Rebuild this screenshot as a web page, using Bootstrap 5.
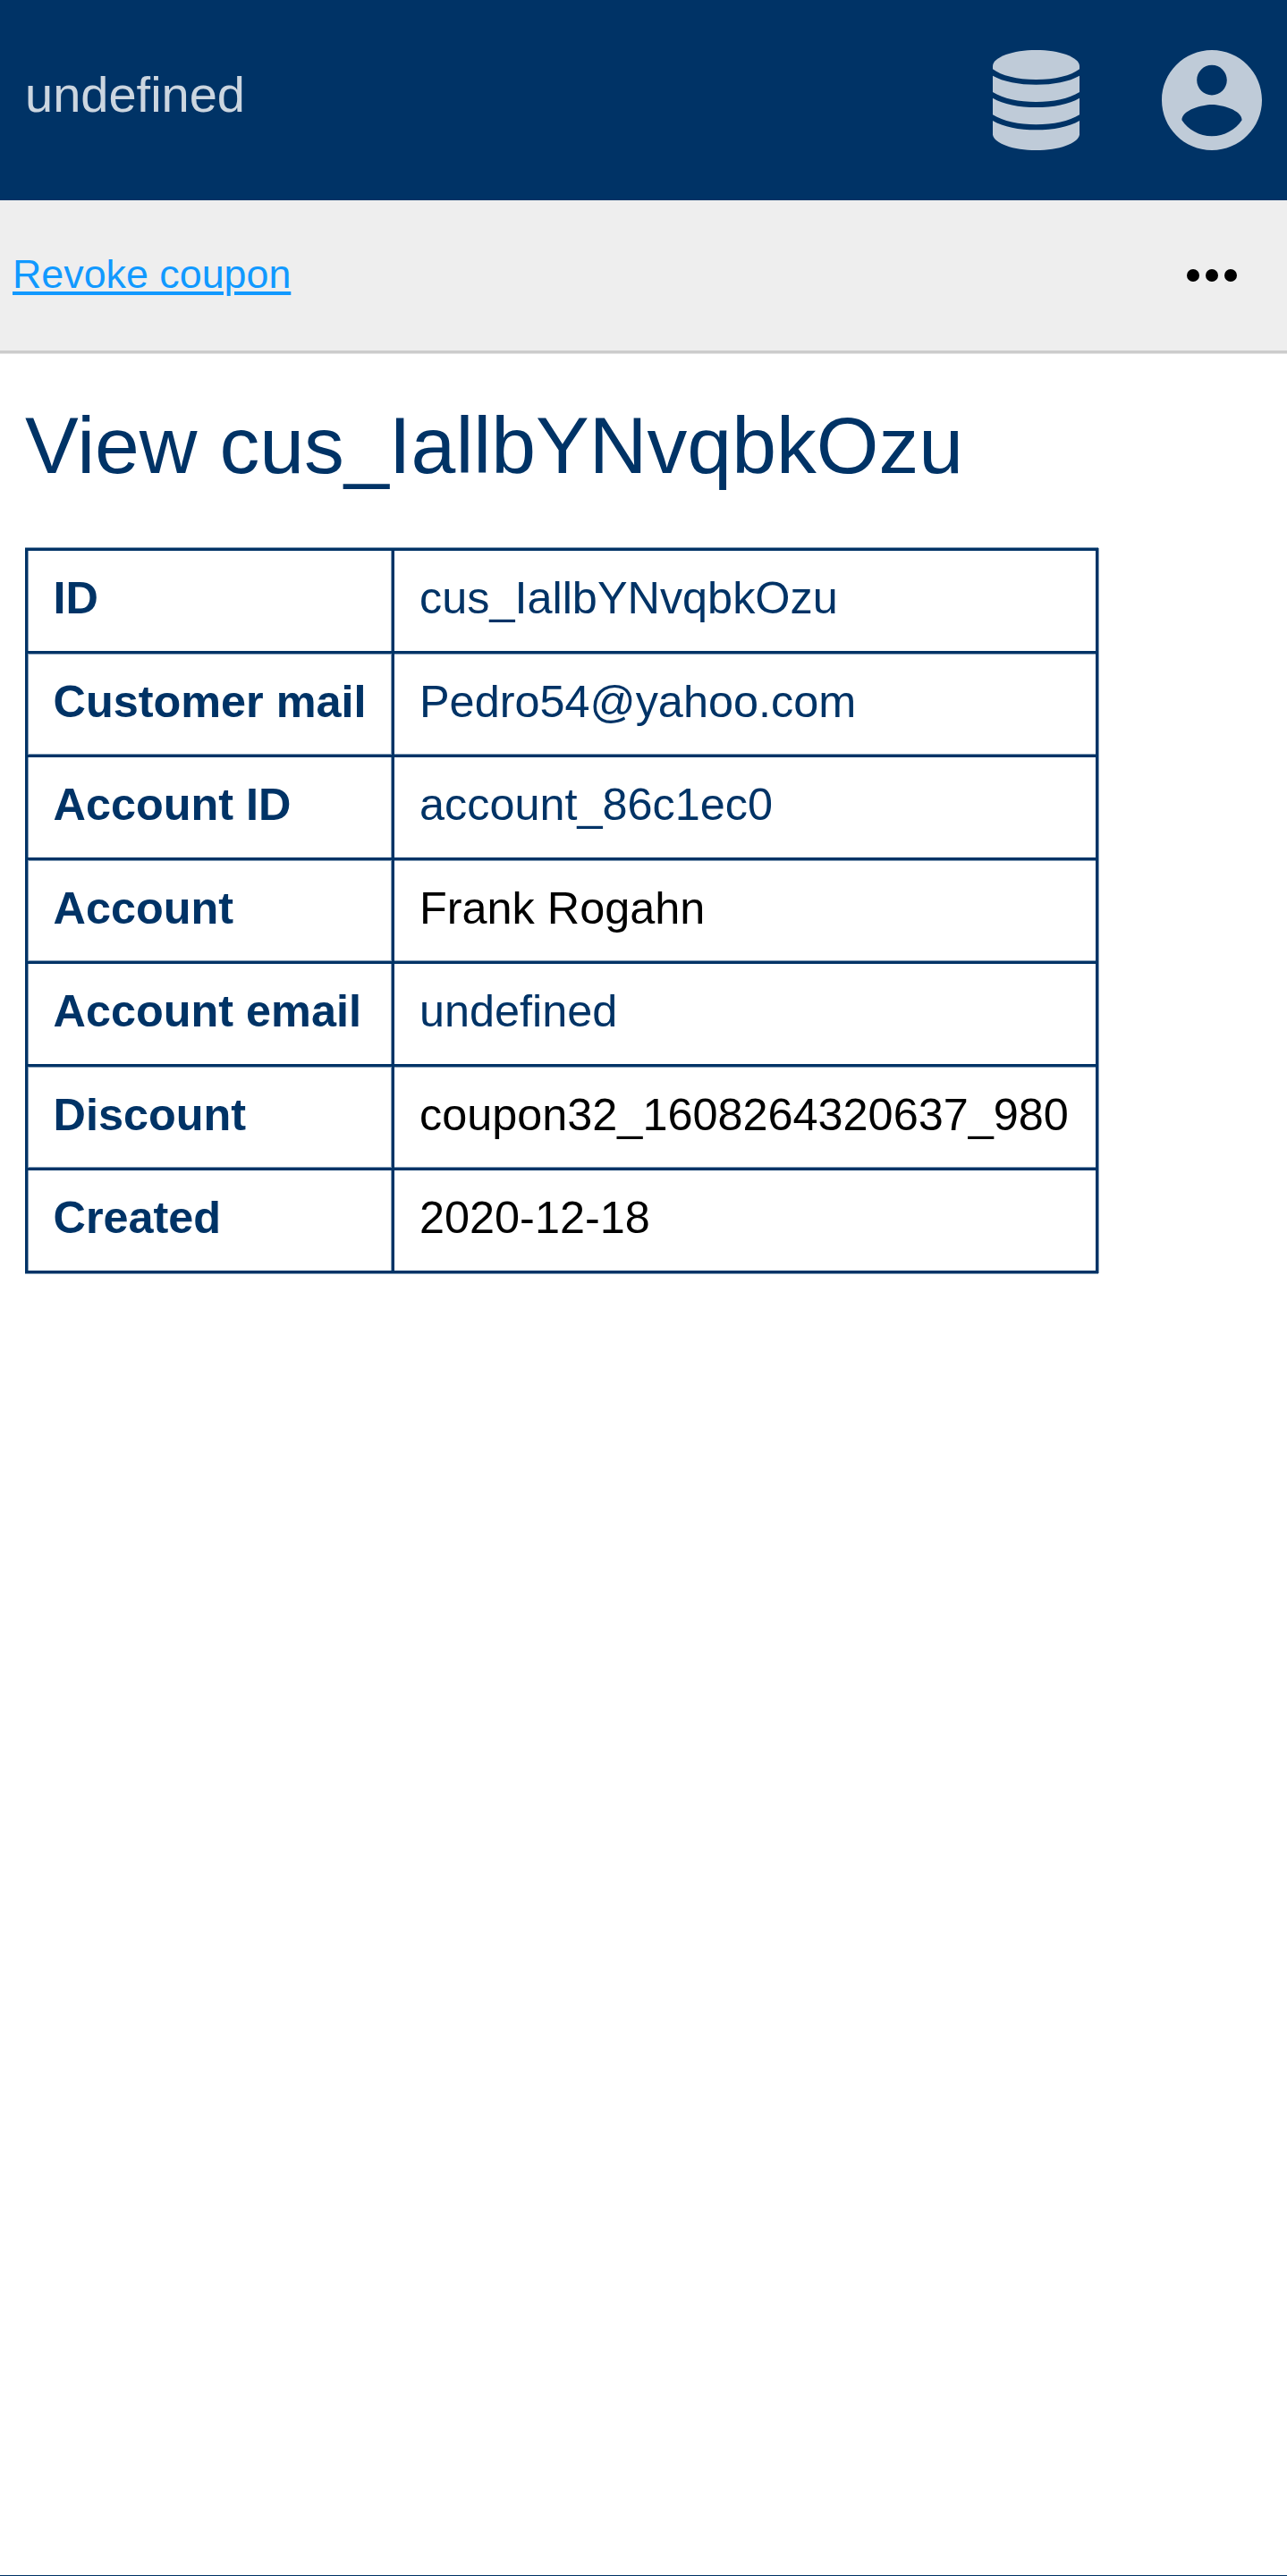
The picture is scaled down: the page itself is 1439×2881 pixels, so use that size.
<!DOCTYPE html>
<html lang="en">
<head>
<meta charset="utf-8">
<meta name="viewport" content="width=device-width, initial-scale=1">
<title>View customer</title>
<link href="https://cdn.jsdelivr.net/npm/bootstrap@5.3.0/dist/css/bootstrap.min.css" rel="stylesheet">
<style>
  :root { --navy: #003366; --navy-soft: #8099b3; }
  body { font-family: "Liberation Sans", Arial, sans-serif; color: #000; background: #fff; }
  a { color: var(--navy); }
  .topbar { height: 224px; padding: 0 28.5px 0 28px; background: var(--navy); }
  .topbar .site-title { font-size: 56px; line-height: 64px; padding-bottom: 12px; color: rgba(255,255,255,.8); }
  .topbar-icons { gap: 92px; color: rgba(255,255,255,.75); }
  .topbar-icons a { color: inherit; }
  .topbar-icons svg { height: 112px; }
  .actionbar { height: 171px; padding: 0 56.5px 0 14px; background: #eee; border-bottom: 3px solid #ccc; box-shadow: 0 1px #e5e5e5; }
  .actionbar .action-link { font-size: 44.8px; line-height: 52px; padding-bottom: 5px; color: #1199ff; text-decoration-thickness: 3.5px; text-underline-offset: 3.5px; }
  .page-title { margin: 52px 0 64px; font-size: 89.6px; line-height: 102px; font-weight: 400; color: var(--navy); }
  .content-area { padding: 0 28px; }
  .details { width: 1200px; border-collapse: separate; border-spacing: 0; font-size: 50.4px; line-height: 56px;
    border-top: 3px solid var(--navy); border-left: 3px solid var(--navy);
    box-shadow: 1px 0 var(--navy-soft), 0 -1px var(--navy-soft), 0 1px var(--navy-soft); }
  .details th, .details td { padding: 0 28px 7px; border: solid var(--navy); border-width: 0 3px 3px 0; white-space: nowrap; }
  .details tr { height: 115px; }
  .details tr:nth-child(even) { height: 116px; }
  .details tr:nth-child(even) > * { padding-bottom: 6px; }
  .details th { width: 410px; padding-left: 28.5px; padding-right: 0; color: var(--navy); box-shadow: inset 1px 0 var(--navy-soft), inset -1px 0 var(--navy-soft); }
  .details tr:nth-child(even) td { box-shadow: inset 0 1px var(--navy-soft), inset 0 -1px var(--navy-soft); }
  .details tr:nth-child(even) th { box-shadow: inset 0 0 0 1px var(--navy-soft); }
  .page-end { height: 1px; background: var(--navy); }
</style>
<script src="https://cdn.jsdelivr.net/npm/bootstrap@5.3.0/dist/js/bootstrap.bundle.min.js"></script>
</head>
<body class="d-flex flex-column min-vh-100">
  <header class="topbar d-flex align-items-center justify-content-between">
    <div class="site-title">undefined</div>
    <nav class="topbar-icons d-flex align-items-center" aria-label="Main">
      <a class="d-flex" href="#" aria-label="Data">
        <svg width="97" viewBox="90 78 291 336" fill="currentColor" aria-hidden="true">
          <path d="M90 131C92 101 158 78 235.500 78S379 101 381 131V142C352 164 300 177 235.500 177S119 164 90 142Z"/>
          <path d="M90 164C125 184 178 194 235.500 194S346 184 381 164V219C346 241 293 252 235.500 252S125 241 90 219Z"/>
          <path d="M90 239C125 260 178 270 235.500 270S346 260 381 239V295C346 317 293 328 235.500 328S125 317 90 295Z"/>
          <path d="M90 315C125 336 178 346 235.500 346S346 336 381 315V362C376 391 312 414 235.500 414S95 391 90 362Z"/>
        </svg>
      </a>
      <a class="d-flex" href="#" aria-label="Account">
        <svg width="112" viewBox="2 2 20 20" fill="currentColor" aria-hidden="true"><path d="M12 2C6.480 2 2 6.480 2 12s4.480 10 10 10 10-4.480 10-10S17.520 2 12 2zm0 3c1.660 0 3 1.340 3 3s-1.340 3-3 3-3-1.340-3-3 1.340-3 3-3zm0 14.200c-2.500 0-4.710-1.280-6-3.220.03-1.990 4-3.080 6-3.080 1.990 0 5.970 1.090 6 3.080-1.290 1.940-3.500 3.220-6 3.220z"/></svg>
      </a>
    </nav>
  </header>
  <div class="actionbar d-flex align-items-center justify-content-between">
    <a class="action-link" href="#">Revoke coupon</a>
    <svg width="56" height="14" viewBox="0 0 56 14" role="img" aria-label="More"><circle cx="7" cy="7" r="7"/><circle cx="28" cy="7" r="7"/><circle cx="49" cy="7" r="7"/></svg>
  </div>
  <main class="content-area flex-grow-1">
    <h1 class="page-title">View cus_IallbYNvqbkOzu</h1>
    <table class="details align-middle">
      <tbody>
        <tr><th scope="row">ID</th><td><a class="text-decoration-none" href="#">cus_IallbYNvqbkOzu</a></td></tr>
        <tr><th scope="row">Customer mail</th><td><a class="text-decoration-none" href="#">Pedro54@yahoo.com</a></td></tr>
        <tr><th scope="row">Account ID</th><td><a class="text-decoration-none" href="#">account_86c1ec0</a></td></tr>
        <tr><th scope="row">Account</th><td>Frank Rogahn</td></tr>
        <tr><th scope="row">Account email</th><td><a class="text-decoration-none" href="#">undefined</a></td></tr>
        <tr><th scope="row">Discount</th><td>coupon32_1608264320637_980</td></tr>
        <tr><th scope="row">Created</th><td>2020-12-18</td></tr>
      </tbody>
    </table>
  </main>
  <footer class="page-end"></footer>
</body>
</html>
